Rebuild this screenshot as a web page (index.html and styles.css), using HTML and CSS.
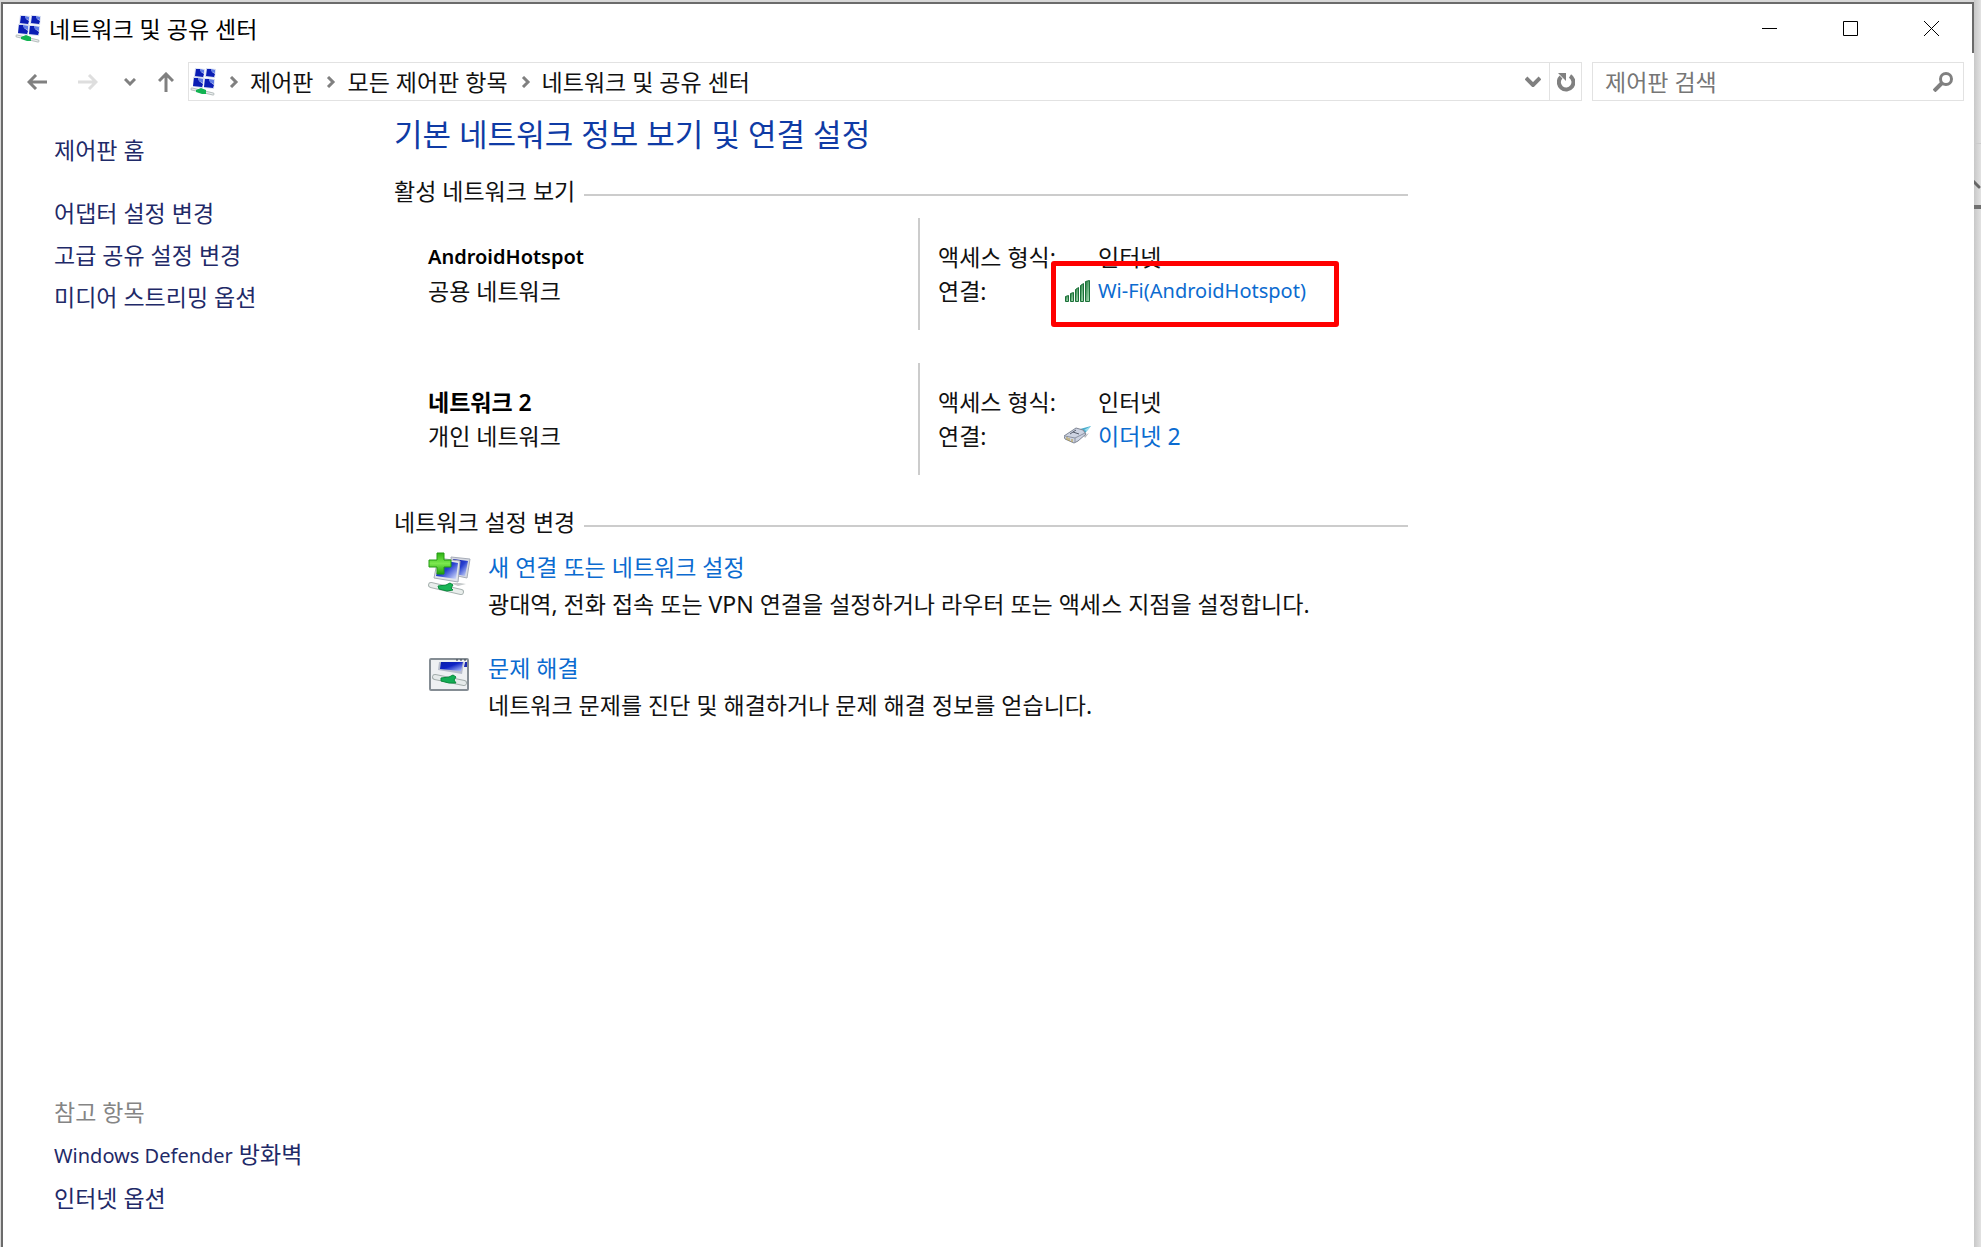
FILE: index.html
```html
<!DOCTYPE html>
<html lang="ko">
<head>
<meta charset="utf-8">
<title>네트워크 및 공유 센터</title>
<link rel="stylesheet" href="styles.css">
</head>
<body>
<svg class="defs" aria-hidden="true">
  <defs>
    <linearGradient id="screen" x1="0" y1="0" x2="1" y2="1"><stop offset="0" stop-color="#0a1fa8"/><stop offset=".45" stop-color="#0f22c4"/><stop offset="1" stop-color="#b9c8ff"/></linearGradient>
    <linearGradient id="glass" x1="0" y1="0" x2="1" y2="1"><stop offset="0" stop-color="#0a129c"/><stop offset=".5" stop-color="#2740d0"/><stop offset="1" stop-color="#e4ecff"/></linearGradient>
    <linearGradient id="plus" x1="0" y1="0" x2="0" y2="1"><stop offset="0" stop-color="#2fb414"/><stop offset=".5" stop-color="#7be84e"/><stop offset="1" stop-color="#1f9d0c"/></linearGradient>
    <linearGradient id="bars" x1="0" y1="0" x2="1" y2="1"><stop offset="0" stop-color="#1d7a3a"/><stop offset="1" stop-color="#b5e3c0"/></linearGradient>
    <symbol id="network" viewBox="0 0 26 28">
      <path d="M5 0l10 1-1 9-10-1zM16 0l10 1-1 9-10-1zM3 9l11 1-1 10-10-1zM14 10l11 1-1 10-10-1z" fill="#d5dcf0"/>
      <path d="M6 1h4l1 3 3 2-1 3-8-1zM17 1h4l1 3 3 2-1 3-8-1zM4 10h4l1 3 4 3-1 3-9-1zM15 11h4l1 3 4 3-1 3-9-1z" fill="#0a1db4"/>
      <path d="M10 1l4 1v3l-3-1zM21 1l4 1v3l-3-1zM8 10l5 1v4l-4-2zM19 11l5 1v4l-4-2z" fill="#5f7ce6"/>
      <path d="M2 21l21 5" stroke="#b9c0c0" stroke-width="3" stroke-linecap="round"/>
      <path d="M2 21l21 5" stroke="#eef2f2" stroke-width="1" stroke-linecap="round"/>
      <path d="M6 22l5-2 5 2v4l-4 0-6-2z" fill="#12b352"/>
    </symbol>
    <symbol id="chevron" viewBox="0 0 10 12"><path d="M2 1l5 5-5 5" fill="none" stroke="#808080" stroke-width="3"/></symbol>
  </defs>
</svg>
<div class="desktop">
  <main class="window">
    <header class="titlebar">
      <svg class="app-icon"><use href="#network"/></svg>
      <h1>네트워크 및 공유 센터</h1>
      <div class="controls">
        <button aria-label="최소화"><svg viewBox="0 0 15 15"><path d="M0 7.5h15"/></svg></button>
        <button aria-label="최대화"><svg viewBox="0 0 15 15"><path d="M.5.5h14v14H.5z"/></svg></button>
        <button aria-label="닫기"><svg viewBox="0 0 15 15"><path d="M0 0l15 15M15 0L0 15"/></svg></button>
      </div>
    </header>
    <nav class="toolbar">
      <div class="history">
        <button class="back" aria-label="뒤로"><svg width="20" height="16" viewBox="0 0 20 16"><path d="M9 1L2 8l7 7M2 8h18" stroke-width="3"/></svg></button>
        <button class="forward" aria-label="앞으로"><svg width="20" height="16" viewBox="0 0 20 16"><path d="M11 1l7 7-7 7M18 8H0" stroke-width="3"/></svg></button>
        <button class="recent" aria-label="최근 위치"><svg width="12" height="8" viewBox="0 0 12 8"><path d="M1 1l5 5 5-5" stroke-width="3"/></svg></button>
        <button class="up" aria-label="위로"><svg width="16" height="20" viewBox="0 0 16 20"><path d="M1 9l7-7 7 7M8 2v18" stroke-width="3"/></svg></button>
      </div>
      <div class="address">
        <svg class="app-icon"><use href="#network"/></svg>
        <ol class="crumbs">
          <li><svg class="chevron"><use href="#chevron"/></svg><a href="#home">제어판</a></li>
          <li><svg class="chevron"><use href="#chevron"/></svg><a href="#all">모든 제어판 항목</a></li>
          <li><svg class="chevron"><use href="#chevron"/></svg><a href="#center">네트워크 및 공유 센터</a></li>
        </ol>
        <button class="drop" aria-label="이전 위치"><svg width="16" height="11" viewBox="0 0 16 11"><path d="M1 2l7 7 7-7" stroke-width="4"/></svg></button>
        <button class="refresh" aria-label="새로 고침"><svg width="18" height="20" viewBox="0 0 18 20"><path d="M13 4A7.300 7.300 0 1 1 4 5" stroke-width="4"/><path d="M1 1h8v8z" fill="#808080" stroke="none"/></svg></button>
      </div>
      <label class="search">
        <input type="text" placeholder="제어판 검색" aria-label="제어판 검색">
        <svg width="20" height="20" viewBox="0 0 20 20"><circle cx="13" cy="7" r="5.500"/><path d="M9 11l-8 8" stroke-width="4"/></svg>
      </label>
    </nav>
    <div class="body">
      <aside class="sidebar">
        <a class="home" href="#home">제어판 홈</a>
        <ul>
          <li><a href="#adapter">어댑터 설정 변경</a></li>
          <li><a href="#sharing">고급 공유 설정 변경</a></li>
          <li><a href="#media">미디어 스트리밍 옵션</a></li>
        </ul>
        <section class="related">
          <h2>참고 항목</h2>
          <ul>
            <li><a href="#defender"><span class="latin">Windows Defender</span> 방화벽</a></li>
            <li><a href="#internet">인터넷 옵션</a></li>
          </ul>
        </section>
      </aside>
      <div class="content">
        <h2 class="heading">기본 네트워크 정보 보기 및 연결 설정</h2>
        <section>
          <h3 class="rule">활성 네트워크 보기</h3>
          <div class="network">
            <div class="name"><strong class="latin">AndroidHotspot</strong><span>공용 네트워크</span></div>
            <dl>
              <dt>액세스 형식:</dt><dd>인터넷</dd>
              <dt>연결:</dt>
              <dd class="marked"><svg class="link-icon" viewBox="0 0 27 24"><g fill="url(#bars)" stroke="#1b7038"><path d="M1.500 17.500l3-1v6h-3z"/><path d="M6.500 14.500l3-1v9h-3z"/><path d="M11.500 10.500l3-2v14h-3z"/><path d="M16.500 6.500l3-2v18h-3z"/><path d="M21.500 2.500l4-1v21h-4z"/></g></svg><a class="latin" href="#wifi">Wi-Fi(AndroidHotspot)</a></dd>
            </dl>
          </div>
          <div class="network">
            <div class="name"><strong>네트워크 2</strong><span>개인 네트워크</span></div>
            <dl>
              <dt>액세스 형식:</dt><dd>인터넷</dd>
              <dt>연결:</dt>
              <dd><svg class="link-icon" viewBox="0 0 27 24"><path d="M16 5l11-3-5 6-3 4z" fill="#48aacb"/><path d="M20 6l7-4-4 5z" fill="#9be0ef"/><path d="M20 12l5-3-4 5z" fill="#b5b8bd"/><path d="M0 12l12-8 7 2 3 4-8 7-4 2-9-4z" fill="#cdd3e2" stroke="#7f8694"/><path d="M1 12l10 2 10-5M11 14v4" fill="none" stroke="#8c93a2"/><path d="M3 13v3M5 14v3M8 15v3" stroke="#b79b3c"/><path d="M9 8l6 2M6 10l6-4" stroke="#555c6b"/></svg><a href="#ethernet">이더넷 2</a></dd>
            </dl>
          </div>
        </section>
        <section>
          <h3 class="rule">네트워크 설정 변경</h3>
          <div class="task">
            <svg viewBox="0 0 44 44"><path d="M24 5l19 2-3 19-14-3z" fill="#d5d9e2" stroke="#a8adb8"/><path d="M26 7l15 2-3 15-10-2z" fill="url(#glass)"/><path d="M11 6l22 3-2 21-24-4z" fill="#e2e5ec" stroke="#a8adb8"/><path d="M13 8l18 3-2 16-20-3z" fill="url(#glass)"/><path d="M23 31l10 0 6 1-8 2z" fill="#c6cacb"/><path d="M4 33l30 7" stroke="#aab4b2" stroke-width="6" stroke-linecap="round"/><path d="M4 33l30 7" stroke="#e9eeec" stroke-width="4" stroke-linecap="round"/><path d="M11 34l8-1 4-2 3 2-2 3 2 2-6 1-8-2z" fill="#19b557" stroke="#078a3a"/><path d="M10 1h7v7h7v7h-7v7h-7v-7H2V8h8z" fill="url(#plus)" stroke="#239b12"/></svg>
            <div><a href="#new">새 연결 또는 네트워크 설정</a><p>광대역, 전화 접속 또는 VPN 연결을 설정하거나 라우터 또는 액세스 지점을 설정합니다.</p></div>
          </div>
          <div class="task">
            <svg viewBox="0 0 44 44"><rect x="3" y="6" width="38" height="31" rx="1" fill="#eef0f2" stroke="#858d94" stroke-width="2"/><path d="M29 7h2M33 7h2M37 7h2" stroke="#333b48"/><path d="M12 9h25l-2 12-24-4z" fill="#b8bdcc"/><path d="M14 9h22l-2 9-21-2z" fill="url(#screen)"/><path d="M38 9h2v5h-3z" fill="#1c2ab0"/><path d="M8 24l29 6" stroke="#a5aead" stroke-width="6" stroke-linecap="round"/><path d="M8 24l29 6" stroke="#e5eaea" stroke-width="4" stroke-linecap="round"/><path d="M14 25l8-1 4-2 3 2-2 3 2 3-7 0-8-2z" fill="#14ad55" stroke="#078a3a"/></svg>
            <div><a href="#fix">문제 해결</a><p>네트워크 문제를 진단 및 해결하거나 문제 해결 정보를 얻습니다.</p></div>
          </div>
        </section>
      </div>
    </div>
  </main>
  <svg class="behind" viewBox="0 0 7 10" aria-hidden="true"><path d="M-2 0l7 7" stroke="#666" stroke-width="3" stroke-linecap="round"/></svg>
</div>
</body>
</html>
```
FILE: styles.css
```css
* { box-sizing: border-box; }
body {
  margin: 0;
  font-family: "Noto Sans", "Noto Sans CJK KR", sans-serif;
  font-size: 23px;
  line-height: 34px;
  color: #111;
}
h1, h2, h3, p, ul, ol, dl, dd { margin: 0; padding: 0; font: inherit; }
ul, ol { list-style: none; }
a { color: inherit; text-decoration: none; }
button { padding: 0; border: 0; background: none; display: grid; place-items: center; }
svg { display: block; flex: none; }
.defs { position: absolute; width: 0; height: 0; }
.latin { font-size: 20px; }

.desktop {
  position: relative;
  min-height: 100vh;
  display: flex;
  padding: 2px 7px 0 1px;
  background:
    linear-gradient(#0000 143px, #ccc 143px, #ccc 144px, #0000 144px, #0000 205px, #707070 205px, #707070 209px, #0000 209px) right / 7px 100% no-repeat,
    linear-gradient(to right, #c8c8c8, #e2e2e2) right / 7px 100% no-repeat,
    #d8d8d8;
}
.behind { position: absolute; right: 0; top: 180px; width: 7px; height: 10px; }
.window {
  flex: 1;
  display: flex;
  flex-direction: column;
  background: #fff;
  border-top: 2px solid #6b6b6b;
  border-left: 2px solid #6b6b6b;
}
.titlebar { display: flex; align-items: center; height: 49px; padding-left: 12px; border-right: 2px solid #6b6b6b; }
.titlebar h1 { flex: 1; margin-left: 8px; color: #000; }
.app-icon { width: 26px; height: 28px; }
.controls { display: flex; }
.controls button { width: 81px; height: 49px; }
.controls svg { width: 15px; height: 15px; fill: none; stroke: #000; }

.toolbar { display: flex; height: 57px; padding: 9px 10px; gap: 10px; padding-left: 24px; }
.toolbar button svg, .search svg { fill: none; stroke: #808080; }
.history { display: flex; align-items: center; width: 151px; }
.history .forward { margin-left: 31px; }
.toolbar .forward svg { stroke: #dedede; }
.history .recent { margin-left: 26px; }
.history .up { margin-left: 22px; }
.address { flex: 1; display: flex; align-items: center; border: 1px solid #e2e2e2; padding-left: 1px; }
.crumbs { flex: 1; display: flex; }
.crumbs li { display: flex; align-items: center; }
.chevron { width: 10px; height: 12px; margin: 0 11px 0 13px; }
.toolbar .drop { width: 32px; height: 37px; }
.toolbar .refresh { width: 32px; height: 37px; border-left: 1px solid #e2e2e2; }
.search { display: flex; align-items: center; width: 372px; padding: 0 10px 0 12px; border: 1px solid #e2e2e2; }
.search input { flex: 1; min-width: 0; padding: 0; border: 0; outline: 0; font: inherit; }
.search input::placeholder { color: #767676; opacity: 1; }
.search svg { stroke-width: 3; }

.body { flex: 1; display: flex; }
.sidebar { display: flex; flex-direction: column; width: 340px; padding: 23px 0 32px 51px; color: #1f2a68; }
.sidebar ul { display: grid; gap: 8px; }
.home { margin-bottom: 29px; }
.related { margin-top: auto; }
.related h2 { margin-bottom: 8px; color: #858585; }

.content { flex: 1; max-width: 1014px; margin-left: 51px; }
.heading { padding-top: 4px; font-size: 31px; line-height: 40px; color: #0f3ba5; }
.rule { display: flex; align-items: center; gap: 9px; }
.rule::after { content: ""; flex: 1; height: 2px; margin-top: 8px; background: #ccc; }
.content section:nth-of-type(1) { padding-top: 20px; }
.network { display: flex; height: 112px; margin: 10px 0 33px 34px; }
.network + .network { margin-bottom: 30px; }
.name, .network dl { padding-top: 22px; }
.name { display: flex; flex-direction: column; width: 492px; border-right: 2px solid #ccc; }
.name strong { font-weight: 600; color: #000; }
.network dl { display: grid; grid-template-columns: 124px 1fr; grid-auto-rows: 34px; align-content: start; padding-left: 18px; }
.network dt { white-space: nowrap; }
.network dd { display: flex; align-items: center; padding-left: 36px; }
.link-icon { width: 27px; height: 24px; margin-left: -34px; margin-right: 7px; }
.network a, .task a { color: #0b6bd0; }
.marked { position: relative; }
.marked::after { content: ""; box-sizing: border-box; position: absolute; left: -11px; top: -13px; width: 288px; height: 66px; border: 5px solid #f00; border-radius: 3px; }
.task { display: flex; gap: 16px; margin: 11px 0 30px 34px; }
.task svg { width: 44px; height: 44px; margin: 2px 1px 0 -1px; }
.task p { margin-top: 3px; }
```
